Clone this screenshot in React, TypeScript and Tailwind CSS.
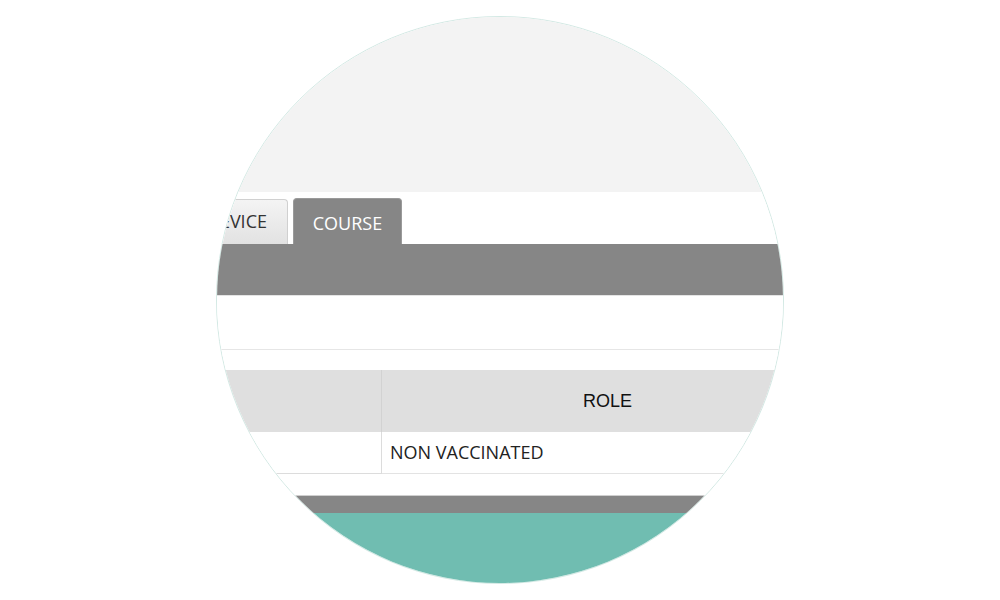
const App = () => {
  return (
    <div className="w-[1000px] h-[600px] bg-white flex justify-center pt-[16px] font-['Open_Sans',sans-serif]">
      <div className="w-[568px] h-[568px] rounded-full overflow-hidden border border-[#d3e9e4] flex flex-col">
        <div className="h-[175px] shrink-0 bg-[#f3f3f3]" />

        {/* tabs */}
        <div className="h-[52px] shrink-0 bg-white flex items-end gap-[5px]">
          <div className="-ml-[33px] w-[104px] h-[45px] pr-[20px] pt-[9px] text-right rounded-t-[4px] border border-b-0 border-[#d0d0d0] bg-gradient-to-b from-[#f4f4f4] to-[#e2e2e2] text-[18px] text-[#333] leading-[24px]">
            DEVICE
          </div>
          <div className="h-[46px] w-[109px] pt-[12px] text-center rounded-t-[4px] border border-b-0 border-[#9a9a9a] bg-[#868686] text-[18px] text-white leading-[24px]">
            COURSE
          </div>
        </div>

        <div className="h-[51px] shrink-0 bg-[#868686]" />
        <div className="h-px shrink-0 bg-[#e4e4e4]" />
        <div className="h-[54px] shrink-0 bg-white border-b border-[#e6e6e6]" />
        <div className="h-[20px] shrink-0 bg-white" />

        {/* table */}
        <div className="w-[616px] shrink-0 grid grid-cols-[165px_1fr]">
          <div className="h-[62px] bg-[#dfdfdf] border-r border-[#d2d2d2]" />
          <div className="h-[62px] bg-[#dfdfdf] flex items-center justify-center font-['Liberation_Sans',sans-serif] text-[18px] text-[#111]">
            ROLE
          </div>
          <div className="h-[42px] bg-white border-r border-b border-[#dcdcdc]" />
          <div className="h-[42px] bg-white border-b border-[#e3e3e3] flex items-center pl-[8px] text-[18px] text-[#222]">
            NON VACCINATED
          </div>
        </div>

        <div className="h-[21px] shrink-0 bg-white" />
        <div className="h-px shrink-0 bg-[#cfcfcf]" />
        <div className="h-[17px] shrink-0 bg-[#868686]" />
        <div className="flex-1 bg-[#70bdb1]" />
      </div>
    </div>
  );
};

export default App;
